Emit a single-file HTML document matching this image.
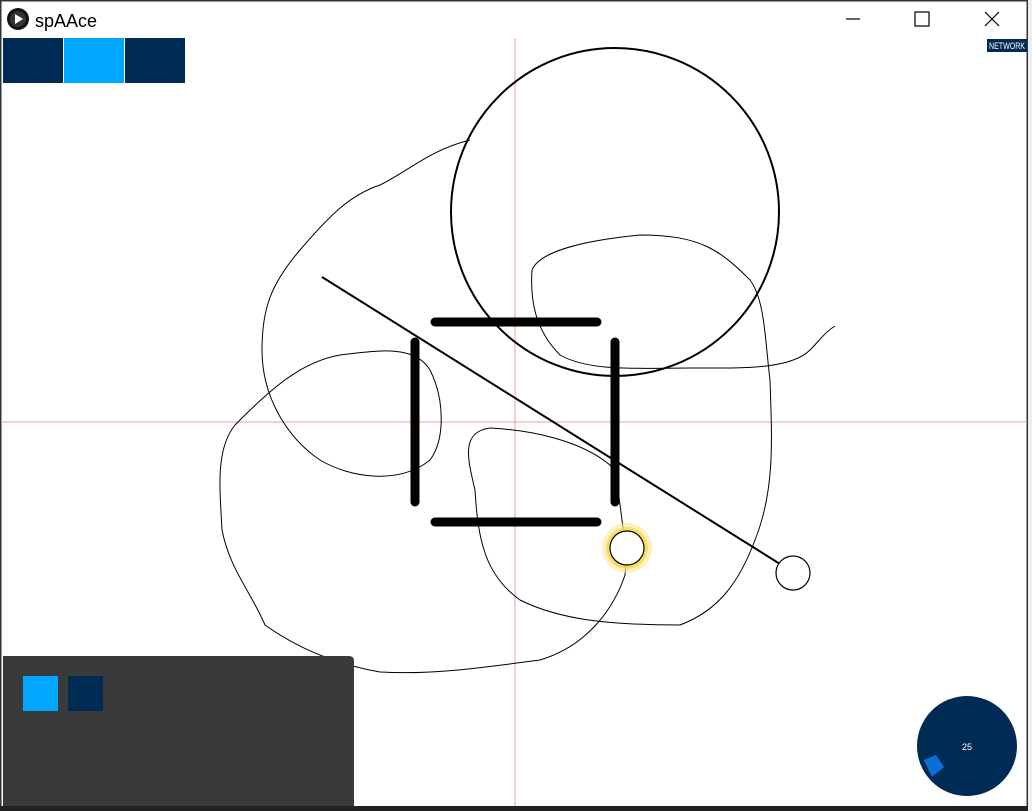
<!DOCTYPE html>
<html><head><style>
html,body{margin:0;padding:0;width:1032px;height:811px;overflow:hidden;background:#fff;font-family:"Liberation Sans",sans-serif}
</style></head><body>
<svg width="1032" height="811" viewBox="0 0 1032 811" xmlns="http://www.w3.org/2000/svg" style="position:absolute;left:0;top:0">
<rect x="0" y="0" width="1032" height="811" fill="#fff"/>
<rect x="0.5" y="0.5" width="1027" height="807" fill="none" stroke="#333" stroke-width="2"/>
<rect x="0" y="806" width="1032" height="5" fill="#222"/>
<rect x="1028" y="0" width="4" height="811" fill="#eee"/>
<circle cx="18" cy="19" r="11" fill="#111"/>
<circle cx="18" cy="19" r="8" fill="#333"/>
<polygon points="15,14 15,24 23,19" fill="#fff"/>
<text x="35" y="27" font-size="18" fill="#000">spAAce</text>
<line x1="846" y1="19" x2="860" y2="19" stroke="#000" stroke-width="1.2"/>
<rect x="915" y="12" width="14" height="14" fill="none" stroke="#000" stroke-width="1.2"/>
<path d="M985 12 L999 26 M999 12 L985 26" stroke="#000" stroke-width="1.2"/>
<rect x="3" y="38" width="60" height="45" fill="#002b55"/>
<rect x="64" y="38" width="60" height="45" fill="#00a8ff"/>
<rect x="125" y="38" width="60" height="45" fill="#002b55"/>
<rect x="987" y="39" width="40" height="13" fill="#002b55"/>
<text x="989" y="49" font-size="9" fill="#fff" textLength="36" lengthAdjust="spacingAndGlyphs">NETWORK</text>
<line x1="515" y1="38" x2="515" y2="806" stroke="#e8a0a0" stroke-width="1"/>
<line x1="2" y1="422" x2="1027" y2="422" stroke="#e8a0a0" stroke-width="1"/>
<path d="M470 140 C430 150 410 170 380 185 C350 195 330 215 300 250 C270 285 262 310 262 350 C262 400 290 440 320 460 C350 478 400 485 430 460 C445 440 445 400 430 370 C415 345 380 350 340 355 C300 362 270 390 235 425 C215 450 220 490 222 530 C230 570 250 590 265 625 C300 650 340 665 380 672 C430 675 480 668 540 660 C590 645 615 605 625 575 L627 550
M627 550 C620 520 620 480 610 465 C580 440 530 430 490 428 C460 432 468 460 475 490 C478 540 485 575 520 600 C560 620 610 625 680 625 C720 610 740 580 755 540 C775 490 772 440 770 380 C765 340 765 300 750 280 C720 250 700 235 640 235 C590 240 540 250 532 270 C530 300 535 330 560 355 C590 372 640 368 690 368 C740 368 790 370 810 350 C820 340 825 332 835 326" fill="none" stroke="#000" stroke-width="1"/>
<circle cx="615" cy="212" r="164" fill="none" stroke="#000" stroke-width="2"/>
<g stroke="#000" stroke-width="9" stroke-linecap="round">
<line x1="435" y1="322" x2="597" y2="322"/>
<line x1="435" y1="522" x2="597" y2="522"/>
<line x1="415" y1="342" x2="415" y2="502"/>
<line x1="615" y1="342" x2="615" y2="502"/>
</g>
<line x1="322" y1="277" x2="780" y2="564" stroke="#000" stroke-width="2"/>
<circle cx="793" cy="573" r="17" fill="#fff" stroke="#000" stroke-width="1.2"/>
<circle cx="627" cy="548" r="25" fill="#fce79a" opacity="0.6"/>
<circle cx="627" cy="548" r="21" fill="#f6d84b" opacity="0.8"/>
<circle cx="627" cy="548" r="17" fill="#fff" stroke="#000" stroke-width="1.2"/>
<path d="M3 656 H349 Q354 656 354 661 V806 H3 Z" fill="#3a3a3a"/>
<rect x="23" y="676" width="35" height="35" fill="#00a8ff"/>
<rect x="68" y="676" width="35" height="35" fill="#002b55"/>
<circle cx="967" cy="746" r="50" fill="#002b55"/>
<polygon points="924,760 936,755 944,767 932,777" fill="#0a6fd6"/>
<text x="967" y="750" font-size="9" fill="#fff" text-anchor="middle">25</text>
</svg>
</body></html>
